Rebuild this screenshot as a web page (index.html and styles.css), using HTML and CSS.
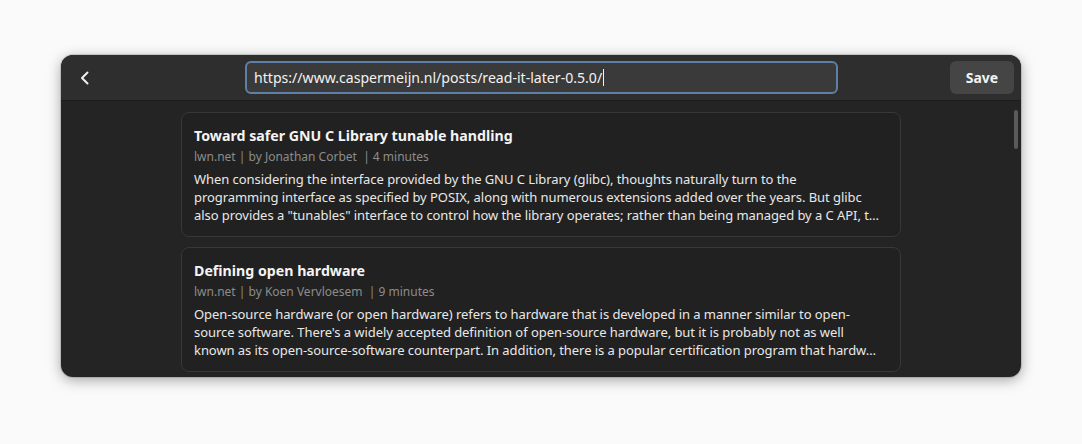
FILE: index.html
```
<!DOCTYPE html>
<html>
<head>
<meta charset="utf-8">
<link rel="stylesheet" href="styles.css">
</head>
<body>
<div class="stage">
  <div class="window">
    <header class="headerbar">
      <button class="back" aria-label="Back">
        <svg width="16" height="16" viewBox="0 0 16 16"><path d="M10.5 2.5 L5 8 L10.5 13.5" fill="none" stroke="#f0f0f0" stroke-width="2" stroke-linecap="round" stroke-linejoin="round"/></svg>
      </button>
      <div class="entry"><span class="url">https://www.caspermeijn.nl/posts/read-it-later-0.5.0/</span><span class="caret"></span></div>
      <button class="save">Save</button>
    </header>
    <main class="content">
      <div class="list">
        <article class="card">
          <h2 class="title">Toward safer GNU C Library tunable handling</h2>
          <div class="meta">lwn.net | by Jonathan Corbet &nbsp;| 4 minutes</div>
          <p class="excerpt">When considering the interface provided by the GNU C Library (glibc), thoughts naturally turn to the<br>programming interface as specified by POSIX, along with numerous extensions added over the years. But glibc<br>also provides a "tunables" interface to control how the library operates; rather than being managed by a C API, t…</p>
        </article>
        <article class="card">
          <h2 class="title">Defining open hardware</h2>
          <div class="meta">lwn.net | by Koen Vervloesem &nbsp;| 9 minutes</div>
          <p class="excerpt">Open-source hardware (or open hardware) refers to hardware that is developed in a manner similar to open-<br>source software. There's a widely accepted definition of open-source hardware, but it is probably not as well<br>known as its open-source-software counterpart. In addition, there is a popular certification program that hardw…</p>
        </article>
      </div>
      <div class="scrollbar"></div>
    </main>
  </div>
</div>
</body>
</html>
```
FILE: styles.css
```
* { box-sizing: border-box; }
html, body { margin: 0; padding: 0; }
body {
  background: #fafafa;
  width: 1082px;
  height: 444px;
  overflow: hidden;
  font-family: "Noto Sans", "Open Sans", sans-serif;
}
.stage {
  padding: 55px 61px 0 61px;
}
.window {
  width: 960px;
  height: 322px;
  border-radius: 12px;
  background: #242424;
  overflow: hidden;
  box-shadow: 0 3px 14px rgba(0,0,0,0.35), 0 0 0 1px rgba(0,0,0,0.12);
  display: flex;
  flex-direction: column;
}
.headerbar {
  height: 46px;
  background: #2e2e2e;
  border-bottom: 1px solid #1c1c1c;
  display: flex;
  align-items: center;
  padding: 0 7px 0 10px;
  flex-shrink: 0;
}
.back {
  width: 28px;
  height: 32px;
  border: 0;
  background: transparent;
  display: flex;
  align-items: center;
  justify-content: center;
  padding: 0;
  margin-left: 0;
}
.entry {
  margin-left: 146px;
  width: 593px;
  height: 33px;
  border: 2px solid #5f80a6;
  border-radius: 6px;
  background: #3a3a3a;
  display: flex;
  align-items: center;
  padding-left: 7px;
  color: #f2f2f2;
  font-size: 14.1px;
}
.caret {
  display: inline-block;
  width: 1px;
  height: 17px;
  background: #f2f2f2;
  margin-left: 1px;
}
.save {
  margin-left: auto;
  width: 64px;
  height: 33px;
  border: 0;
  border-radius: 6px;
  background: #454545;
  color: #f2f2f2;
  font-family: inherit;
  font-weight: 700;
  font-size: 14px;
}
.content {
  flex: 1;
  position: relative;
  overflow: hidden;
}
.list {
  width: 720px;
  margin: 11px auto 0;
  display: flex;
  flex-direction: column;
  gap: 10px;
}
.card {
  border: 1px solid #383838;
  border-radius: 8px;
  background: #212121;
  padding: 11px 12px 11px 12px;
  height: 125px;
}
.title {
  margin: 0;
  font-size: 14.2px;
  font-weight: 700;
  color: #f4f4f4;
  line-height: 24px;
}
.meta {
  font-size: 12px;
  color: #8c8c8c;
  line-height: 17px;
  margin-top: 0;
}
.excerpt {
  margin: 5px 0 0;
  font-size: 13px;
  line-height: 18px;
  letter-spacing: -0.06px;
  white-space: nowrap;
  color: #e8e8e8;
}
.scrollbar {
  position: absolute;
  right: 3px;
  top: 9px;
  width: 4px;
  height: 39px;
  border-radius: 2px;
  background: #5a5a5a;
}
```
